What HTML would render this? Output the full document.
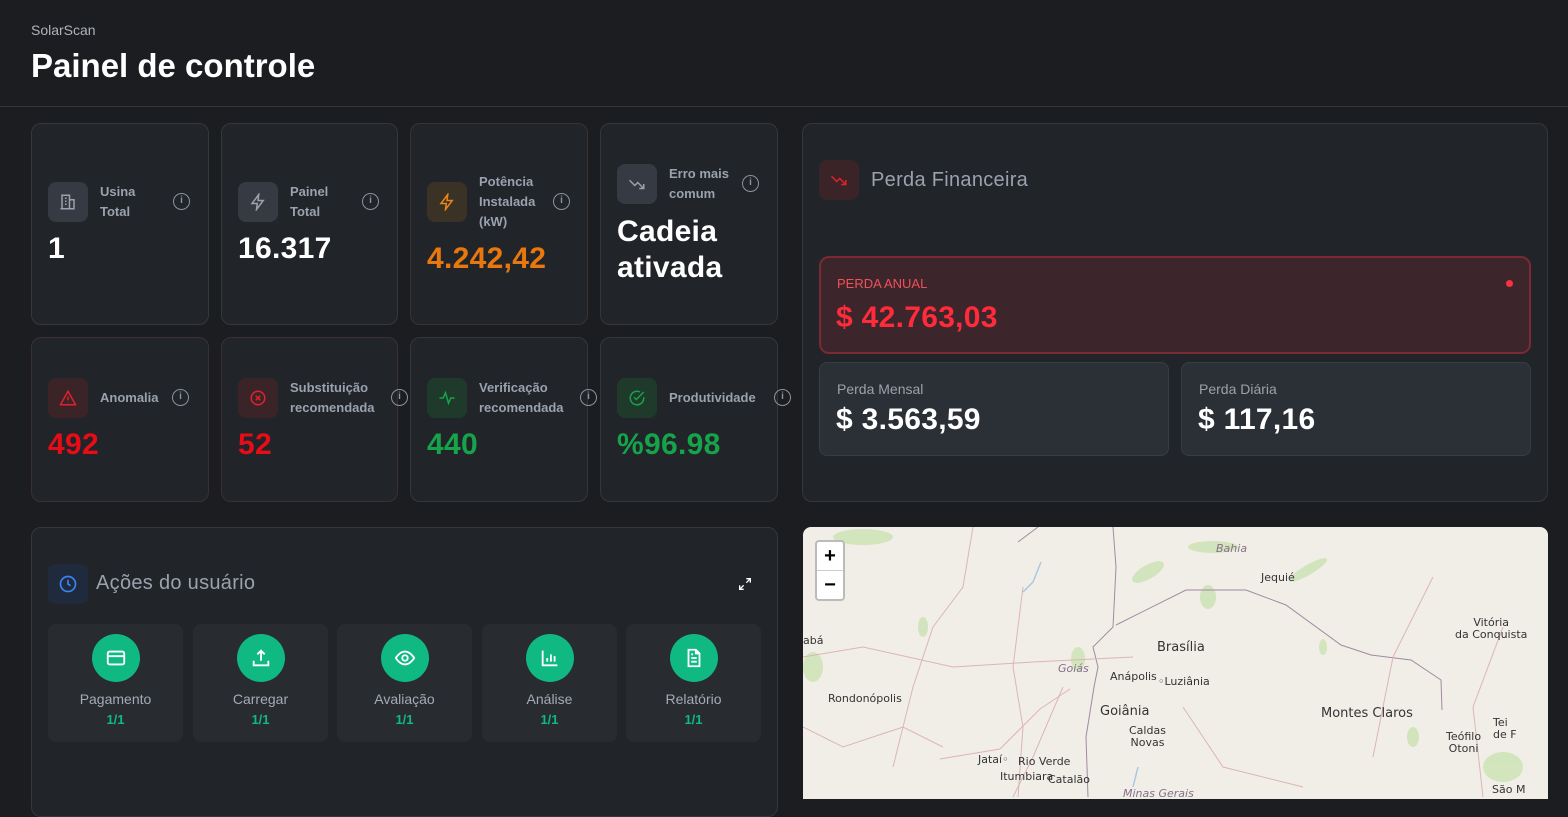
<!DOCTYPE html>
<html><head><meta charset="utf-8"><style>
*{box-sizing:border-box;margin:0;padding:0}
body{width:1568px;height:799px;overflow:hidden;background:#1b1d21;font-family:"Liberation Sans",sans-serif;color:#fff;position:relative}
.hdr{position:absolute;left:0;top:0;width:1568px;height:107px;border-bottom:1px solid #33363b}
.brand{position:absolute;left:31px;top:22px;font-size:14px;color:#aeb3bb}
.title{position:absolute;left:31px;top:47px;font-size:33px;font-weight:bold;letter-spacing:0px}
.card{position:absolute;background:#212429;border:1px solid #34373c;border-radius:10px}
.ic{position:absolute;width:40px;height:40px;border-radius:8px;display:flex;align-items:center;justify-content:center}
.lbl{position:absolute;font-size:13px;font-weight:bold;color:#9aa2ae;line-height:20px;letter-spacing:0px}
.val{position:absolute;font-size:30px;font-weight:bold;letter-spacing:0.3px}
.info{position:absolute;width:17px;height:17px;border:1.5px solid #8d939b;border-radius:50%;font-size:10px;color:#8d939b;text-align:center;line-height:14px;font-weight:bold}
svg{display:block}
.act{position:absolute;top:624px;width:135px;height:118px;background:#282b30;border-radius:8px;text-align:center}
.act .c{width:48px;height:48px;border-radius:50%;background:#10b981;margin:10px auto 0;display:flex;align-items:center;justify-content:center}
.act .n{font-size:14px;color:#a4abb5;margin-top:9px}
.act .f{font-size:13px;font-weight:bold;color:#10b981;margin-top:5px}
.mt{position:absolute;font-size:11px;color:#333;font-family:"DejaVu Sans",sans-serif}
</style></head><body>
<div class="hdr"><div class="brand">SolarScan</div><div class="title">Painel de controle</div></div>

<div class="card" style="left:31px;top:123px;width:178px;height:202px"></div>
<div class="card" style="left:221px;top:123px;width:177px;height:202px"></div>
<div class="card" style="left:410px;top:123px;width:178px;height:202px;border-color:#3a3430"></div>
<div class="card" style="left:600px;top:123px;width:178px;height:202px"></div>

<div class="ic" style="left:48px;top:182px;background:#363a42"><svg width="18" height="18" viewBox="0 0 24 24" fill="none" stroke="#9aa2ae" stroke-width="2"><rect x="4" y="3" width="10" height="18"/><path d="M14 9h6v12H2M8 7h2M8 11h2M8 15h2"/></svg></div>
<div class="lbl" style="left:100px;top:182px">Usina<br>Total</div><div class="info" style="left:173px;top:193px">i</div>
<div class="val" style="left:48px;top:232px">1</div>

<div class="ic" style="left:238px;top:182px;background:#363a42"><svg width="18" height="18" viewBox="0 0 24 24" fill="none" stroke="#9aa2ae" stroke-width="2"><path d="M13 2L4 14h7l-1 8 9-12h-7z"/></svg></div>
<div class="lbl" style="left:290px;top:182px">Painel<br>Total</div><div class="info" style="left:362px;top:193px">i</div>
<div class="val" style="left:238px;top:232px">16.317</div>

<div class="ic" style="left:427px;top:182px;background:#3b3226"><svg width="18" height="18" viewBox="0 0 24 24" fill="none" stroke="#e8861a" stroke-width="2"><path d="M13 2L4 14h7l-1 8 9-12h-7z"/></svg></div>
<div class="lbl" style="left:479px;top:172px">Potência<br>Instalada<br>(kW)</div><div class="info" style="left:553px;top:193px">i</div>
<div class="val" style="left:427px;top:242px;color:#e8780e">4.242,42</div>

<div class="ic" style="left:617px;top:164px;background:#363a42"><svg width="18" height="18" viewBox="0 0 24 24" fill="none" stroke="#9aa2ae" stroke-width="2"><path d="M2 7l7 7 4-4 8 8M15 18h6v-6"/></svg></div>
<div class="lbl" style="left:669px;top:164px">Erro mais<br>comum</div><div class="info" style="left:742px;top:175px">i</div>
<div class="val" style="left:617px;top:214px;line-height:36px">Cadeia<br>ativada</div>

<div class="card" style="left:31px;top:337px;width:178px;height:165px;border-color:#3a3033"></div>
<div class="card" style="left:221px;top:337px;width:177px;height:165px;border-color:#3a3033"></div>
<div class="card" style="left:410px;top:337px;width:178px;height:165px"></div>
<div class="card" style="left:600px;top:337px;width:178px;height:165px"></div>

<div class="ic" style="left:48px;top:378px;background:#3a2428"><svg width="18" height="18" viewBox="0 0 24 24" fill="none" stroke="#e3202b" stroke-width="2"><path d="M12 3L2 21h20zM12 10v5M12 18v.5"/></svg></div>
<div class="lbl" style="left:100px;top:388px">Anomalia</div><div class="info" style="left:172px;top:389px">i</div>
<div class="val" style="left:48px;top:428px;color:#e80c17">492</div>

<div class="ic" style="left:238px;top:378px;background:#3a2428"><svg width="18" height="18" viewBox="0 0 24 24" fill="none" stroke="#e3202b" stroke-width="2"><circle cx="12" cy="12" r="9"/><path d="M9 9l6 6M15 9l-6 6"/></svg></div>
<div class="lbl" style="left:290px;top:378px">Substituição<br>recomendada</div><div class="info" style="left:391px;top:389px">i</div>
<div class="val" style="left:238px;top:428px;color:#e80c17">52</div>

<div class="ic" style="left:427px;top:378px;background:#1f3a2b"><svg width="18" height="18" viewBox="0 0 24 24" fill="none" stroke="#16a34a" stroke-width="2"><path d="M2 12h5l3-7 4 14 3-7h5"/></svg></div>
<div class="lbl" style="left:479px;top:378px">Verificação<br>recomendada</div><div class="info" style="left:580px;top:389px">i</div>
<div class="val" style="left:427px;top:428px;color:#16a34a">440</div>

<div class="ic" style="left:617px;top:378px;background:#1f3a2b"><svg width="18" height="18" viewBox="0 0 24 24" fill="none" stroke="#16a34a" stroke-width="2"><path d="M21 11v1a9 9 0 1 1-5-8M8 11l3 3 10-10"/></svg></div>
<div class="lbl" style="left:669px;top:388px">Produtividade</div><div class="info" style="left:774px;top:389px">i</div>
<div class="val" style="left:617px;top:428px;color:#16a34a">%96.98</div>

<div class="card" style="left:802px;top:123px;width:746px;height:379px"></div>
<div class="ic" style="left:819px;top:160px;background:#3a2428"><svg width="18" height="18" viewBox="0 0 24 24" fill="none" stroke="#e3202b" stroke-width="2"><path d="M2 7l7 7 4-4 8 8M15 18h6v-6"/></svg></div>
<div style="position:absolute;left:871px;top:169px;font-size:20px;color:#9aa2ae;letter-spacing:0.3px">Perda Financeira</div>
<div style="position:absolute;left:819px;top:256px;width:712px;height:98px;background:#3d262b;border:2px solid #7a2a32;border-radius:10px"></div>
<div style="position:absolute;left:837px;top:276px;font-size:13px;color:#f0505a">PERDA ANUAL</div>
<div style="position:absolute;left:1506px;top:280px;width:7px;height:7px;border-radius:50%;background:#ff3040"></div>
<div style="position:absolute;left:836px;top:301px;font-size:30px;font-weight:bold;color:#ff2b3a;letter-spacing:0.3px">$ 42.763,03</div>
<div style="position:absolute;left:819px;top:362px;width:350px;height:94px;background:#2b2f36;border:1px solid #383c43;border-radius:8px"></div>
<div style="position:absolute;left:1181px;top:362px;width:350px;height:94px;background:#2b2f36;border:1px solid #383c43;border-radius:8px"></div>
<div style="position:absolute;left:837px;top:381px;font-size:14px;color:#9aa2ae">Perda Mensal</div>
<div style="position:absolute;left:1199px;top:381px;font-size:14px;color:#9aa2ae">Perda Diária</div>
<div style="position:absolute;left:836px;top:403px;font-size:30px;font-weight:bold;letter-spacing:0.3px">$ 3.563,59</div>
<div style="position:absolute;left:1198px;top:403px;font-size:30px;font-weight:bold;letter-spacing:0.3px">$ 117,16</div>

<div class="card" style="left:31px;top:527px;width:747px;height:290px"></div>
<div class="ic" style="left:48px;top:564px;background:#1f2b3d"><svg width="20" height="20" viewBox="0 0 24 24" fill="none" stroke="#3b82f6" stroke-width="2"><circle cx="12" cy="12" r="9"/><path d="M12 7v5l3 2"/></svg></div>
<div style="position:absolute;left:96px;top:572px;font-size:20px;color:#9aa2ae;letter-spacing:0.3px">Ações do usuário</div>
<svg style="position:absolute;left:737px;top:576px" width="16" height="16" viewBox="0 0 24 24" fill="none" stroke="#fff" stroke-width="2"><path d="M14 4h6v6M20 4l-6 6M10 20H4v-6M4 20l6-6"/></svg>
<div class="act" style="left:48px"><div class="c"><svg width="22" height="22" viewBox="0 0 24 24" fill="none" stroke="#fff" stroke-width="2"><rect x="3" y="5" width="18" height="14" rx="2"/><path d="M3 10h18"/></svg></div><div class="n">Pagamento</div><div class="f">1/1</div></div>
<div class="act" style="left:193px"><div class="c"><svg width="22" height="22" viewBox="0 0 24 24" fill="none" stroke="#fff" stroke-width="2"><path d="M4 15v5h16v-5M12 15V4M8 8l4-4 4 4"/></svg></div><div class="n">Carregar</div><div class="f">1/1</div></div>
<div class="act" style="left:337px"><div class="c"><svg width="22" height="22" viewBox="0 0 24 24" fill="none" stroke="#fff" stroke-width="2"><path d="M2 12s4-7 10-7 10 7 10 7-4 7-10 7S2 12 2 12z"/><circle cx="12" cy="12" r="3"/></svg></div><div class="n">Avaliação</div><div class="f">1/1</div></div>
<div class="act" style="left:482px"><div class="c"><svg width="22" height="22" viewBox="0 0 24 24" fill="none" stroke="#fff" stroke-width="2"><path d="M4 4v16h16M9 16v-4M13 16V8M17 16v-6"/></svg></div><div class="n">Análise</div><div class="f">1/1</div></div>
<div class="act" style="left:626px"><div class="c"><svg width="22" height="22" viewBox="0 0 24 24" fill="none" stroke="#fff" stroke-width="2"><path d="M14 3H6v18h12V7zM14 3v4h4M9 12h6M9 16h6M9 8h2"/></svg></div><div class="n">Relatório</div><div class="f">1/1</div></div>

<div style="position:absolute;left:803px;top:527px;width:745px;height:272px;background:#f1eee8;border-radius:8px 8px 0 0;overflow:hidden">
<svg width="745" height="272" style="position:absolute;left:0;top:0">
<g fill="#cfe3b8" opacity=".9"><ellipse cx="345" cy="45" rx="18" ry="7" transform="rotate(-30 345 45)"/><ellipse cx="505" cy="43" rx="22" ry="5" transform="rotate(-30 505 43)"/><ellipse cx="405" cy="70" rx="8" ry="12"/><ellipse cx="10" cy="140" rx="10" ry="15"/><ellipse cx="700" cy="240" rx="20" ry="15"/><ellipse cx="275" cy="132" rx="7" ry="12"/><ellipse cx="60" cy="10" rx="30" ry="8"/><ellipse cx="410" cy="20" rx="25" ry="6"/><ellipse cx="120" cy="100" rx="5" ry="10"/><ellipse cx="520" cy="120" rx="4" ry="8"/><ellipse cx="610" cy="210" rx="6" ry="10"/></g>
<g fill="none" stroke="#a9c8e0" stroke-width="1.5"><path d="M238 35l-8 20-10 10M225 60l-5 5"/><path d="M335 240l-5 20"/></g>
<g fill="none" stroke="#a08aa0" stroke-width="1"><path d="M310 0l3 40 -3 60 -20 20 5 20-4 20 -8 50 2 60"/><path d="M313 98l70-35 60 0 40 15 55 40 30 10 40 5 30 20 1 30"/><path d="M235 0l-20 15"/></g>
<g fill="none" stroke="#dcb5b5" stroke-width="1"><path d="M0 130l60-10 90 20 80-5 100-5"/><path d="M170 0l-10 60-30 40-20 60-20 80"/><path d="M220 60l-10 80 10 60 -5 70"/><path d="M0 200l40 20 60-20 40 20"/><path d="M137 232l60-10 40-40 30-20"/><path d="M260 160l-30 70-20 40"/><path d="M380 180l40 60 80 20"/><path d="M630 50l-40 80-20 100"/><path d="M700 100l-30 80 10 90"/></g>
</svg>
<div style="position:absolute;left:12px;top:13px;width:30px;height:61px;background:#fff;border:2px solid #bbb;border-radius:4px"><div style="height:29px;border-bottom:1px solid #ccc;color:#000;font-size:20px;font-weight:bold;text-align:center;line-height:28px">+</div><div style="color:#000;font-size:20px;font-weight:bold;text-align:center;line-height:28px">−</div></div>
<div class="mt" style="left:0;top:107px">abá</div>
<div class="mt" style="left:25px;top:165px">Rondonópolis</div>
<div class="mt" style="left:255px;top:135px;font-style:italic;color:#86708a">Goiás</div>
<div class="mt" style="left:354px;top:113px;font-size:13px">Brasília</div>
<div class="mt" style="left:307px;top:143px">Anápolis</div>
<div class="mt" style="left:355px;top:148px">◦Luziânia</div>
<div class="mt" style="left:297px;top:177px;font-size:13px">Goiânia</div>
<div class="mt" style="left:326px;top:198px;text-align:center;line-height:12px">Caldas<br>Novas</div>
<div class="mt" style="left:518px;top:179px;font-size:13px">Montes Claros</div>
<div class="mt" style="left:175px;top:226px">Jataí◦</div>
<div class="mt" style="left:215px;top:228px">Rio Verde</div>
<div class="mt" style="left:197px;top:243px">Itumbiara</div>
<div class="mt" style="left:245px;top:246px">Catalão</div>
<div class="mt" style="left:320px;top:260px;font-style:italic;color:#86708a">Minas Gerais</div>
<div class="mt" style="left:413px;top:15px;font-style:italic;color:#86708a">Bahia</div>
<div class="mt" style="left:458px;top:44px">Jequié</div>
<div class="mt" style="left:652px;top:90px;text-align:center;line-height:12px">Vitória<br>da Conquista</div>
<div class="mt" style="left:643px;top:204px;text-align:center;line-height:12px">Teófilo<br>Otoni</div>
<div class="mt" style="left:690px;top:190px;line-height:12px">Tei<br>de F</div>
<div class="mt" style="left:689px;top:256px">São M</div>
</div>
</body></html>
